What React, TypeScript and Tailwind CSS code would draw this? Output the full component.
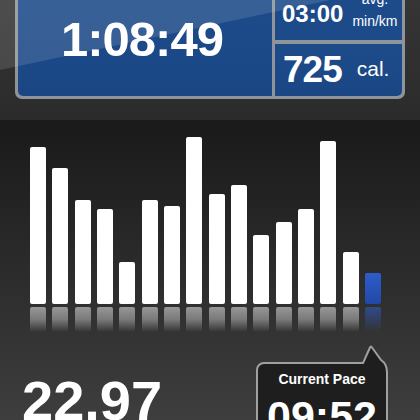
import React from "react";

const bars = [157, 136, 104, 95, 42, 104, 98, 167, 110, 119, 69, 82, 95, 163, 52];

export default function App() {
  return (
    <div className="w-[420px] h-[420px] overflow-hidden bg-[#1a1a1a] font-['Liberation_Sans',Arial,sans-serif] text-white">
      {/* Top stats panel */}
      <div className="relative h-[120px] bg-gradient-to-b from-[#353535] to-[#2b2b2b] pl-[15px]">
        <div className="flex w-[390px] h-[99px] gap-[3px] border-x-[3px] border-b-[3px] border-[#8f949b] bg-[#8f949b] rounded-b-[7px]">
          <div className="w-[254px] bg-gradient-to-b from-[#1d4b8a] to-[#1a4684] rounded-bl-[5px] flex justify-center pt-[15px] pr-[6px]">
            <span className="text-[49px] font-bold leading-none tracking-[-1px]">1:08:49</span>
          </div>
          <div className="flex-1 flex flex-col gap-[4px]">
            <div className="h-[40px] bg-[#1d4b8a] flex pl-[7px] overflow-hidden">
              <span className="mt-[2px] text-[24px] font-bold leading-none">03:00</span>
              <div className="ml-[9px] -mt-[12px] flex flex-col items-center text-[14px] leading-[22px]">
                <span>avg.</span>
                <span>min/km</span>
              </div>
            </div>
            <div className="flex-1 bg-gradient-to-b from-[#1d4b8a] to-[#1a4684] rounded-br-[5px] flex pl-[8px]">
              <span className="mt-[7px] text-[37px] font-bold leading-none tracking-[-1px]">725</span>
              <span className="ml-[15px] mt-[14px] text-[21px] leading-none">cal.</span>
            </div>
          </div>
        </div>
        <div className="pointer-events-none absolute inset-0 bg-white/[0.12] [clip-path:polygon(0_0,330px_0,0_70px)]" />
      </div>

      {/* Chart section */}
      <div className="h-[300px] bg-gradient-to-b from-[#1a1a1a] to-[#3e3e3e]">
        <div className="h-[184px] flex items-end gap-[6.33px] pl-[30px]">
          {bars.map((h, i) => (
            <div key={i} className="w-[16px] rounded-[2px] bg-white" style={{ height: h }} />
          ))}
          <div className="w-[16px] h-[31px] rounded-[2px] bg-gradient-to-b from-[#2e5dca] to-[#2148a6]" />
        </div>
        <div className="mt-[3px] h-[25px] flex items-start gap-[6.33px] pl-[30px]">
          {bars.map((_, i) => (
            <div
              key={i}
              className="w-[16px] h-full rounded-[2px] bg-gradient-to-b from-white/50 via-white/35 to-white/0"
            />
          ))}
          <div className="w-[16px] h-full rounded-[2px] bg-gradient-to-b from-[#2e5dca]/60 via-[#2e5dca]/30 to-transparent" />
        </div>

        {/* Bottom row */}
        <div className="flex items-start pl-[22px]">
          <span className="mt-[41px] text-[56px] font-bold leading-none">22.97</span>
          <div className="relative ml-auto mr-[32px] mt-[30px] w-[132px] h-[80px] rounded-[8px] rounded-tr-[14px] border-2 border-[#a0a0a0] bg-[#1e1e1e] flex flex-col items-center pt-[8px]">
            <svg
              className="absolute left-[104px] -top-[20px] overflow-visible"
              width="28"
              height="36"
              viewBox="0 0 28 36"
            >
              <path d="M0,17.5 L9,2 L19,16 Q25,20 25,28 L25,36 L0,36 Z" fill="#1e1e1e" />
              <path
                d="M-1,19 L1,19 L8,3.5 Q9,1.5 10,3.5 L19,16 Q25,20 25,28 L25,36"
                fill="none"
                stroke="#a0a0a0"
                strokeWidth="2"
                strokeLinejoin="round"
              />
            </svg>
            <span className="relative text-[14px] font-bold leading-none">Current Pace</span>
            <span className="relative mt-[9px] text-[43px] font-bold leading-none">09:52</span>
          </div>
        </div>
      </div>
    </div>
  );
}
